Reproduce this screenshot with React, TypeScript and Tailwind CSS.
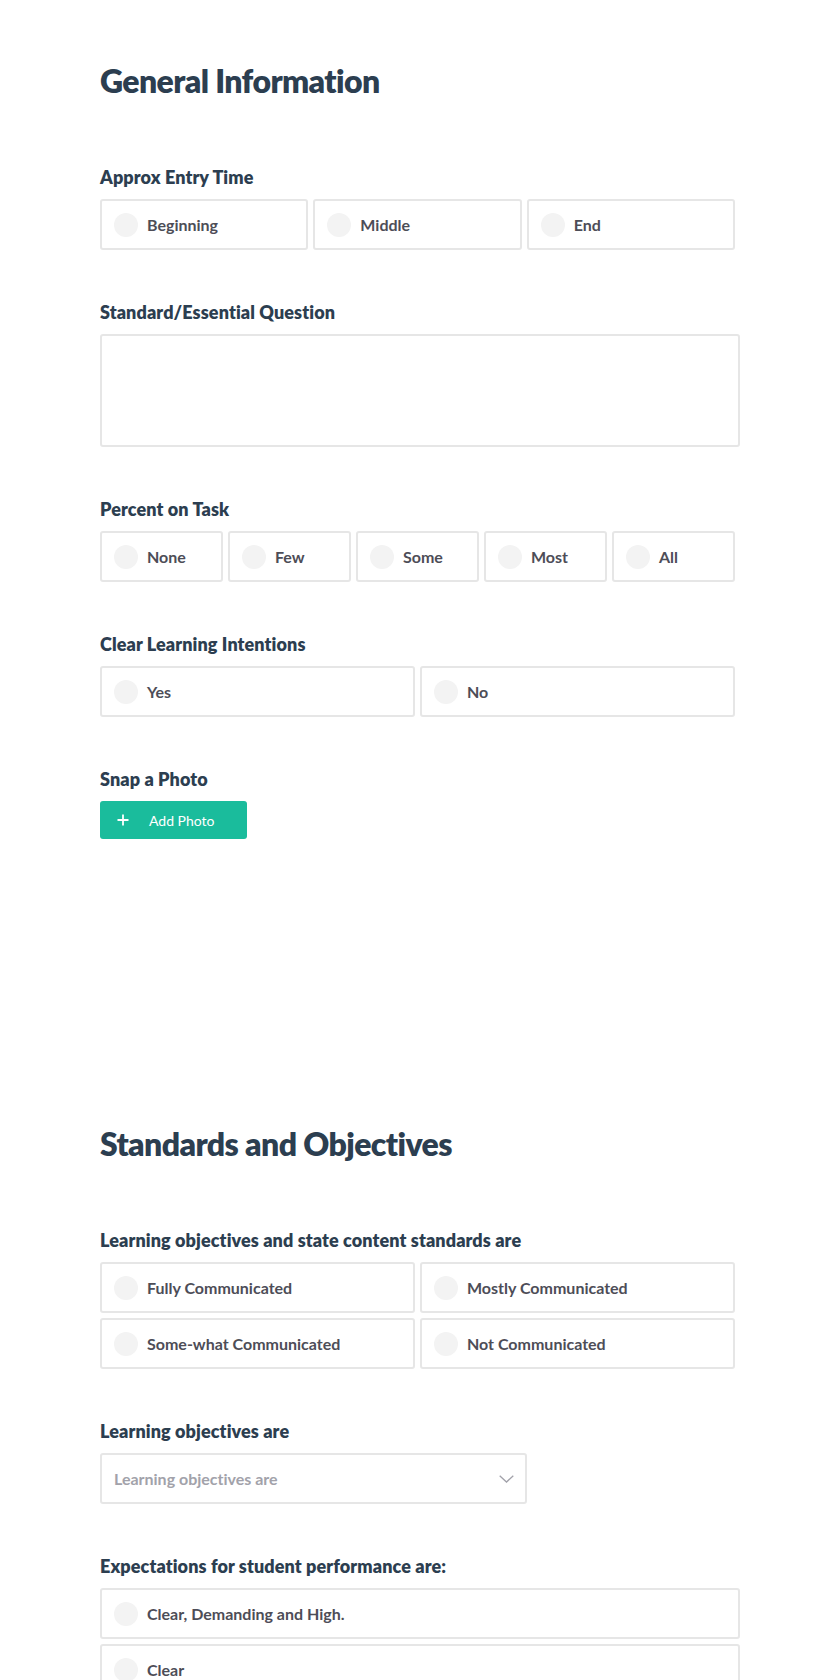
import { useState } from "react";

type Cols = 1 | 2 | 3 | 5;

const gridCols: Record<Cols, string> = {
  1: "grid-cols-1",
  2: "grid-cols-2 mr-[5px]",
  3: "grid-cols-3 mr-[5px]",
  5: "grid-cols-5 mr-[5px]",
};

function Label({ children }: { children: React.ReactNode }) {
  return (
    <div className="mb-[10px] text-[18px] leading-[24px] font-extrabold tracking-[0.1px] text-[#2c3e50]">
      {children}
    </div>
  );
}

function RadioGroup({
  options,
  cols,
}: {
  options: string[];
  cols: Cols;
}) {
  const [value, setValue] = useState<string | null>(null);
  return (
    <div className={`grid gap-[5px] ${gridCols[cols]}`}>
      {options.map((opt) => (
        <button
          key={opt}
          type="button"
          onClick={() => setValue(opt)}
          className="flex h-[51px] items-center gap-[9px] rounded-[3px] border-2 border-[#e6e6e6] bg-white px-[12px] text-left"
        >
          <span
            className={`h-6 w-6 shrink-0 rounded-full ${
              value === opt ? "bg-[#1abc9c]" : "bg-[#f3f3f3]"
            }`}
          />
          <span className="text-[16px] font-bold text-[#4d4d57]">{opt}</span>
        </button>
      ))}
    </div>
  );
}

function Field({ label, children }: { label: string; children: React.ReactNode }) {
  return (
    <div className="mb-[50px]">
      <Label>{label}</Label>
      {children}
    </div>
  );
}

export default function App() {
  return (
    <div className="min-h-screen bg-white font-['Lato','Liberation_Sans',sans-serif] [font-variant-ligatures:none]">
      <div className="mx-auto w-[640px] pt-[61px]">
        <h2 className="mb-[64px] text-[32px] leading-[40px] font-extrabold tracking-[-0.6px] text-[#2c3e50]">
          General Information
        </h2>

        <Field label="Approx Entry Time">
          <RadioGroup cols={3} options={["Beginning", "Middle", "End"]} />
        </Field>

        <Field label="Standard/Essential Question">
          <textarea className="block h-[113px] w-full resize-none rounded-[3px] border-2 border-[#e6e6e6] px-3 py-2 text-[16px] text-[#4d4d57] outline-none" />
        </Field>

        <Field label="Percent on Task">
          <RadioGroup cols={5} options={["None", "Few", "Some", "Most", "All"]} />
        </Field>

        <Field label="Clear Learning Intentions">
          <RadioGroup cols={2} options={["Yes", "No"]} />
        </Field>

        <div>
          <Label>Snap a Photo</Label>
          <button
            type="button"
            className="flex h-[38px] w-[147px] items-center rounded-[3px] bg-[#1abc9c] pl-[17px] text-white"
          >
            <svg width="12" height="12" viewBox="0 0 12 12" className="shrink-0">
              <path d="M6 0.5v11M0.5 6h11" stroke="white" strokeWidth="1.8" fill="none" />
            </svg>
            <span className="ml-[20px] text-[14px] font-normal">Add Photo</span>
          </button>
        </div>

        <h2 className="mt-[285px] mb-[64px] text-[32px] leading-[40px] font-extrabold tracking-[-0.6px] text-[#2c3e50]">
          Standards and Objectives
        </h2>

        <Field label="Learning objectives and state content standards are">
          <RadioGroup
            cols={2}
            options={[
              "Fully Communicated",
              "Mostly Communicated",
              "Some-what Communicated",
              "Not Communicated",
            ]}
          />
        </Field>

        <Field label="Learning objectives are">
          <div className="flex h-[51px] w-[427px] items-center justify-between rounded-[3px] border-2 border-[#e6e6e6] px-[12px]">
            <span className="text-[16px] font-bold text-[#a2a2aa]">
              Learning objectives are
            </span>
            <svg width="15" height="8" viewBox="0 0 15 8" className="mr-[-1px]">
              <path d="M0.7 0.7l6.8 6.3 6.8-6.3" stroke="#a2a2aa" strokeWidth="1.3" fill="none" />
            </svg>
          </div>
        </Field>

        <Field label="Expectations for student performance are:">
          <RadioGroup cols={1} options={["Clear, Demanding and High.", "Clear"]} />
        </Field>
      </div>
    </div>
  );
}
